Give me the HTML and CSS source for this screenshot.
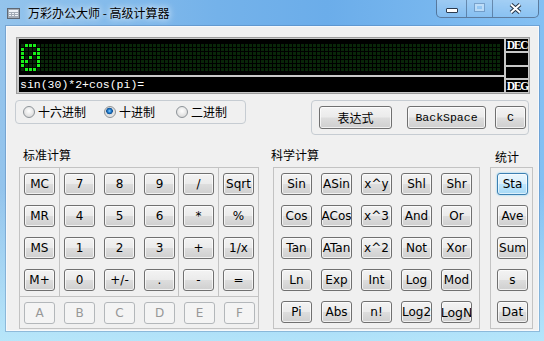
FILE: index.html
```html
<!DOCTYPE html>
<html>
<head>
    <title>万彩办公大师 - 高级计算器</title>
    <link rel="stylesheet" href="styles.css">
</head>
<body>

<div class="window">
    <div class="titlebar">
        <svg class="app-icon" width="13" height="11" viewBox="0 0 13 11">
            <rect x="0.5" y="0.5" width="12" height="10" fill="#a3acb6" stroke="#5f6873"/>
            <rect x="2" y="2" width="9" height="2" fill="#eef3f7"/>
            <rect x="2" y="5" width="2" height="1" fill="#eef3f7"/>
            <rect x="5" y="5" width="2" height="1" fill="#eef3f7"/>
            <rect x="8" y="5" width="3" height="1" fill="#eef3f7"/>
            <rect x="2" y="7" width="2" height="1" fill="#eef3f7"/>
            <rect x="5" y="7" width="2" height="1" fill="#eef3f7"/>
            <rect x="8" y="7" width="3" height="1" fill="#eef3f7"/>
        </svg>
        <span class="title">万彩办公大师 - 高级计算器</span>
        <div class="caption-buttons">
            <span class="cap cap-min"><i></i></span>
            <span class="cap cap-max"><i></i></span>
            <span class="cap cap-close">
                <svg width="13" height="11" viewBox="0 0 13 11">
                    <path d="M2 1.5 L11 9.5 M11 1.5 L2 9.5" stroke="#263547" stroke-width="4"/>
                    <path d="M2 1.5 L11 9.5 M11 1.5 L2 9.5" stroke="#fff" stroke-width="2"/>
                </svg>
            </span>
        </div>
    </div>

    <div class="client">
        <div class="display">
            <div class="screen">
                <div class="matrix">
                    <div class="dots">
                        <svg class="digit" width="20" height="28" viewBox="0 0 20 28" fill="#19ee19">
                            <rect x="4" y="0" width="3" height="3"/><rect x="8" y="0" width="3" height="3"/><rect x="12" y="0" width="3" height="3"/>
                            <rect x="0" y="4" width="3" height="3"/><rect x="16" y="4" width="3" height="3"/>
                            <rect x="0" y="8" width="3" height="3"/><rect x="12" y="8" width="3" height="3"/><rect x="16" y="8" width="3" height="3"/>
                            <rect x="0" y="12" width="3" height="3"/><rect x="8" y="12" width="3" height="3"/><rect x="16" y="12" width="3" height="3"/>
                            <rect x="0" y="16" width="3" height="3"/><rect x="4" y="16" width="3" height="3"/><rect x="16" y="16" width="3" height="3"/>
                            <rect x="0" y="20" width="3" height="3"/><rect x="16" y="20" width="3" height="3"/>
                            <rect x="4" y="24" width="3" height="3"/><rect x="8" y="24" width="3" height="3"/><rect x="12" y="24" width="3" height="3"/>
                        </svg>
                    </div>
                </div>
                <div class="expr">sin(30)*2+cos(pi)=</div>
            </div>
            <div class="modes">
                <span>DEC</span>
                <span></span>
                <span></span>
                <span>DEG</span>
            </div>
        </div>

        <div class="controls">
            <div class="radix-group">
                <label class="radio radio-hex"><i></i>十六进制</label>
                <label class="radio radio-dec on"><i></i>十进制</label>
                <label class="radio"><i></i>二进制</label>
            </div>
            <div class="edit-group">
                <button class="btn btn-expr">表达式</button>
                <button class="btn btn-back">BackSpace</button>
                <button class="btn btn-clear">C</button>
            </div>
        </div>

        <div class="sections">
            <div class="section std">
                <div class="caption">标准计算</div>
                <div class="panel">
                    <div class="keys-top">
                        <div class="col col-mem">
                            <button class="btn">MC</button>
                            <button class="btn">MR</button>
                            <button class="btn">MS</button>
                            <button class="btn">M+</button>
                        </div>
                        <div class="col col-digits">
                            <button class="btn">7</button>
                            <button class="btn">8</button>
                            <button class="btn">9</button>
                            <button class="btn">4</button>
                            <button class="btn">5</button>
                            <button class="btn">6</button>
                            <button class="btn">1</button>
                            <button class="btn">2</button>
                            <button class="btn">3</button>
                            <button class="btn">0</button>
                            <button class="btn">+/-</button>
                            <button class="btn">.</button>
                        </div>
                        <div class="col col-ops">
                            <button class="btn">/</button>
                            <button class="btn">*</button>
                            <button class="btn">+</button>
                            <button class="btn">-</button>
                        </div>
                        <div class="col col-fn">
                            <button class="btn">Sqrt</button>
                            <button class="btn">%</button>
                            <button class="btn">1/x</button>
                            <button class="btn">=</button>
                        </div>
                    </div>
                    <div class="hex-row">
                        <button class="btn" disabled>A</button>
                        <button class="btn" disabled>B</button>
                        <button class="btn" disabled>C</button>
                        <button class="btn" disabled>D</button>
                        <button class="btn" disabled>E</button>
                        <button class="btn" disabled>F</button>
                    </div>
                </div>
            </div>

            <div class="section sci">
                <div class="caption">科学计算</div>
                <div class="panel sci-keys">
                    <button class="btn">Sin</button>
                    <button class="btn">ASin</button>
                    <button class="btn">x^y</button>
                    <button class="btn">Shl</button>
                    <button class="btn">Shr</button>
                    <button class="btn">Cos</button>
                    <button class="btn">ACos</button>
                    <button class="btn">x^3</button>
                    <button class="btn">And</button>
                    <button class="btn">Or</button>
                    <button class="btn">Tan</button>
                    <button class="btn">ATan</button>
                    <button class="btn">x^2</button>
                    <button class="btn">Not</button>
                    <button class="btn">Xor</button>
                    <button class="btn">Ln</button>
                    <button class="btn">Exp</button>
                    <button class="btn">Int</button>
                    <button class="btn">Log</button>
                    <button class="btn">Mod</button>
                    <button class="btn">Pi</button>
                    <button class="btn">Abs</button>
                    <button class="btn">n!</button>
                    <button class="btn">Log2</button>
                    <button class="btn btn-wide">LogN</button>
                </div>
            </div>

            <div class="section stats">
                <div class="caption">统计</div>
                <div class="panel stat-keys">
                    <button class="btn btn-hot">Sta</button>
                    <button class="btn">Ave</button>
                    <button class="btn">Sum</button>
                    <button class="btn">s</button>
                    <button class="btn">Dat</button>
                </div>
            </div>
        </div>
    </div>
</div>

</body>
</html>
```

FILE: styles.css
```css
body { margin: 0; font-family: "Noto Sans CJK SC", sans-serif; font-size: 12px; color: #000; }

/* window frame */
.window { width: 544px; height: 341px; overflow: hidden;
    background: linear-gradient(180deg, rgba(255,255,255,0) 55%, rgba(190,236,252,.85) 100%),
                linear-gradient(90deg, #94c4ec 0%, #74b2ea 40%, #6badea 60%, #84c0f3 100%); }
.titlebar { height: 26px; display: flex; align-items: center; }
.app-icon { margin-left: 7px; display: block; }
.title { margin-left: 8px; line-height: 16px; text-shadow: 0 0 6px rgba(255,255,255,.9), 0 0 10px rgba(255,255,255,.6); }
.caption-buttons { display: flex; align-self: flex-start; margin-left: auto; margin-right: 5px; height: 18px; box-sizing: border-box;
    border: 1px solid rgba(38,58,88,.55); border-top: 0; border-radius: 0 0 5px 5px; overflow: hidden;
    background: linear-gradient(rgba(255,255,255,.28), rgba(255,255,255,.08)); }
.cap { display: flex; justify-content: center; align-items: flex-start; box-sizing: border-box; }
.cap + .cap { border-left: 1px solid rgba(38,58,88,.45); }
.cap-min { width: 29px; }
.cap-max { width: 26px; }
.cap-close { width: 46px; padding-top: 3px; }
.cap-close svg { display: block; }
.cap-min i { display: block; width: 12px; height: 5px; margin-top: 8px; box-sizing: border-box; background: #fff; border: 1px solid #2b3b4f; border-radius: 1px; }
.cap-max i { display: block; width: 11px; height: 9px; margin-top: 3px; box-sizing: border-box; border: 1px solid rgba(60,90,130,.35);
    box-shadow: inset 0 0 0 2px rgba(220,236,252,.55); }

.client { margin: 0 5px 0 6px; height: 305px; box-sizing: border-box; background: #f0f0f0;
    border: 1px solid #f6f9fc; box-shadow: 0 0 0 1px rgba(70,110,160,.35); }

/* display */
.display { margin: 10px 0 0 9px; width: 514px; height: 57px; box-sizing: border-box; display: flex; gap: 2px;
    border: 1px solid #9c9c9c; background: #c8c8c8; padding: 1px 1px 1px 2px; }
.screen { width: 485px; display: flex; flex-direction: column; gap: 2px; }
.matrix { height: 36px; box-sizing: border-box; background: #000; padding: 5px 3px 3px 2px; }
.dots { height: 28px;
    background: linear-gradient(90deg, transparent 3px, #000 3px) 0 0 / 4px 4px,
                linear-gradient(transparent 3px, #000 3px) 0 0 / 4px 4px,
                #092709; }
.digit { display: block; }
.expr { height: 15px; background: #000; color: #fff; font: 11.5px/15px "Liberation Mono", monospace; padding-left: 1px; }
.modes { flex: 1; display: grid; grid-template-rows: repeat(4, 1fr); gap: 2px; }
.modes span { background: #000; color: #fff; font: bold 11.5px/12px "Liberation Serif", serif; letter-spacing: -1.2px; padding-left: 1px; }

/* buttons */
.btn { width: 31px; height: 22px; padding: 0; box-sizing: border-box; display: flex; align-items: center; justify-content: center;
    flex-shrink: 0; overflow: hidden; white-space: nowrap; font: 12px "DejaVu Sans", sans-serif; color: #000;
    border: 1px solid #707070; border-radius: 3px;
    background: linear-gradient(#f3f3f3 0%, #ebebeb 48%, #dddddd 52%, #cfcfcf 100%);
    box-shadow: inset 0 0 0 1px rgba(255,255,255,.7); }
.btn-wide { font-size: 12.5px; }
.btn:disabled { color: #979797; border-color: #b3b7ba; background: #f4f4f4; box-shadow: none; }
.btn-hot { border-color: #3c7fb1; background: linear-gradient(#eaf6fd 0%, #d9f0fc 48%, #bee6fd 52%, #a7d9f5 100%);
    box-shadow: inset 0 0 0 1px rgba(255,255,255,.6), 0 0 2px #6ccaf5; }

/* radix and edit row */
.controls { display: flex; align-items: flex-start; margin: 6px 0 0 8px; }
.radix-group { width: 231px; height: 24px; box-sizing: border-box; display: flex; align-items: center; padding-left: 7px;
    border: 1px solid #c6ccd2; border-radius: 4px; }
.radio { display: flex; align-items: center; gap: 3px; line-height: 14px; }
.radio-hex { width: 81px; }
.radio-dec { width: 72px; }
.radio i { display: block; width: 12px; height: 12px; box-sizing: border-box; border-radius: 50%; border: 1px solid #8d9398;
    background: radial-gradient(circle at 50% 40%, #ffffff 0, #e6e6e6 55%, #cdcdcd 100%); }
.radio.on i { background: radial-gradient(circle at 45% 40%, #8fd2ff 0, #2a86d6 1.5px, #0b4e93 3px, #dcdcdc 3.6px, #f2f2f2 100%); }
.edit-group { margin-left: 65px; width: 218px; height: 35px; box-sizing: border-box; display: flex; align-items: flex-start; padding: 5px 0 0 7px;
    border: 1px solid #c6ccd2; border-radius: 4px; }
.edit-group .btn { height: 23px; }
.edit-group .btn-expr { width: 73px; font-family: "Noto Sans CJK SC", sans-serif; }
.edit-group .btn-back { width: 79px; margin-left: 15px; font-family: "Liberation Mono", monospace; font-size: 11.5px; }
.edit-group .btn-clear { width: 31px; margin-left: 9px; font-family: "Liberation Mono", monospace; font-size: 11.5px; }

/* key sections */
.sections { display: flex; margin: 11px 0 0 12px; }
.caption { height: 18px; line-height: 18px; margin-bottom: 3px; }
.panel { height: 162px; box-sizing: border-box; border: 1px solid #c3c3c3; }
.std { width: 240px; }
.std .caption { padding-left: 4px; }
.keys-top { display: flex; height: 128px; }
.col { box-sizing: border-box; padding-top: 5px; display: flex; flex-direction: column; align-items: center; gap: 10px; }
.col-mem, .col-ops { width: 40px; border-right: 1px solid #c3c3c3; }
.col-digits { width: 119px; border-right: 1px solid #c3c3c3; display: grid; grid-template-columns: repeat(3, 31px);
    column-gap: 9px; row-gap: 10px; align-content: start; padding-left: 4px; }
.col-fn { flex: 1; }
.hex-row { height: 31px; box-sizing: border-box; border-top: 1px solid #c3c3c3; display: flex; gap: 9px; padding: 5px 0 0 4px; }

.sci { width: 207px; margin-left: 14px; }
.sci .caption { margin-left: -2px; }
.sci-keys { display: grid; grid-template-columns: repeat(5, 31px); column-gap: 9px; row-gap: 10px; align-content: start; padding: 5px 0 0 7px; }

.stats { width: 43px; margin-left: 10px; }
.stats .caption { padding-left: 5px; line-height: 22px; }
.stat-keys { display: flex; flex-direction: column; gap: 10px; padding: 5px 0 0 6px; }
```
